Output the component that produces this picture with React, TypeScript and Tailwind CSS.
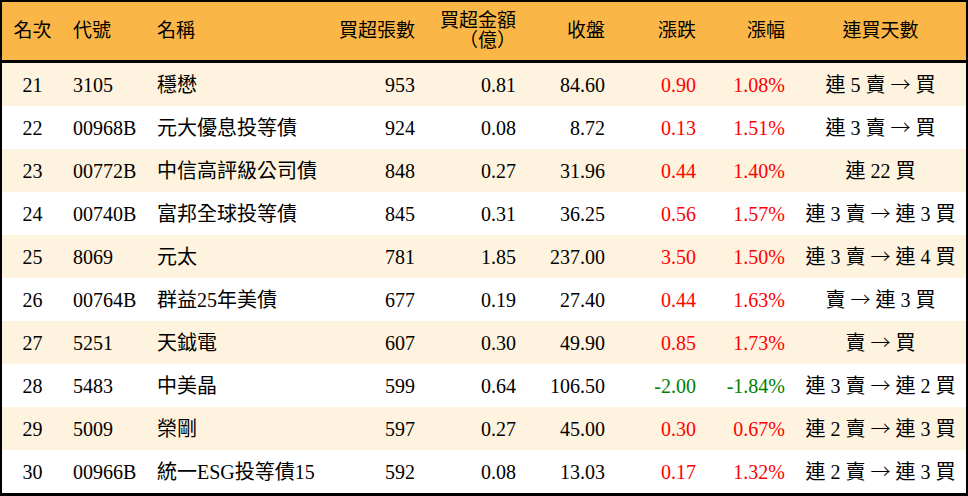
type Row = {
  rank: number;
  code: string;
  name: string;
  lots: string;
  amount: string;
  close: string;
  change: string;
  pct: string;
  streak: string;
};

const rows: Row[] = [
  { rank: 21, code: "3105", name: "穩懋", lots: "953", amount: "0.81", close: "84.60", change: "0.90", pct: "1.08%", streak: "連 5 賣 → 買" },
  { rank: 22, code: "00968B", name: "元大優息投等債", lots: "924", amount: "0.08", close: "8.72", change: "0.13", pct: "1.51%", streak: "連 3 賣 → 買" },
  { rank: 23, code: "00772B", name: "中信高評級公司債", lots: "848", amount: "0.27", close: "31.96", change: "0.44", pct: "1.40%", streak: "連 22 買" },
  { rank: 24, code: "00740B", name: "富邦全球投等債", lots: "845", amount: "0.31", close: "36.25", change: "0.56", pct: "1.57%", streak: "連 3 賣 → 連 3 買" },
  { rank: 25, code: "8069", name: "元太", lots: "781", amount: "1.85", close: "237.00", change: "3.50", pct: "1.50%", streak: "連 3 賣 → 連 4 買" },
  { rank: 26, code: "00764B", name: "群益25年美債", lots: "677", amount: "0.19", close: "27.40", change: "0.44", pct: "1.63%", streak: "賣 → 連 3 買" },
  { rank: 27, code: "5251", name: "天鉞電", lots: "607", amount: "0.30", close: "49.90", change: "0.85", pct: "1.73%", streak: "賣 → 買" },
  { rank: 28, code: "5483", name: "中美晶", lots: "599", amount: "0.64", close: "106.50", change: "-2.00", pct: "-1.84%", streak: "連 3 賣 → 連 2 買" },
  { rank: 29, code: "5009", name: "榮剛", lots: "597", amount: "0.27", close: "45.00", change: "0.30", pct: "0.67%", streak: "連 2 賣 → 連 3 買" },
  { rank: 30, code: "00966B", name: "統一ESG投等債15", lots: "592", amount: "0.08", close: "13.03", change: "0.17", pct: "1.32%", streak: "連 2 賣 → 連 3 買" },
];

// the arrow in Liberation Serif is tiny, take the full-width one from the CJK font
const Streak = ({ text }: { text: string }) => {
  if (!text.includes("→")) return <>{text}</>;
  const [before, after] = text.split(" → ");
  return (
    <>
      {before}{" "}
      <span className="font-['Noto_Sans_CJK_TC',sans-serif] font-light">→</span>
      {" "}{after}
    </>
  );
};

export default function App() {
  return (
    <div className="w-[968px] h-[496px] bg-white font-['Liberation_Serif','Noto_Sans_CJK_TC',serif] text-black">
      <div className="border-2 border-b-[3px] border-black">
        <table className="w-full table-fixed border-separate border-spacing-0">
          <colgroup>
            <col className="w-[61px]" />
            <col className="w-[84px]" />
            <col className="w-[178px]" />
            <col className="w-[100px]" />
            <col className="w-[101px]" />
            <col className="w-[89px]" />
            <col className="w-[91px]" />
            <col className="w-[89px]" />
            <col className="w-[171px]" />
          </colgroup>
          <thead>
            <tr className="h-[61px] bg-[#fab748] text-[19px]">
              <th className="px-[10px] border-b-[3px] border-black font-normal text-center">名次</th>
              <th className="px-[10px] border-b-[3px] border-black font-normal text-left">代號</th>
              <th className="px-[10px] border-b-[3px] border-black font-normal text-left">名稱</th>
              <th className="px-[10px] border-b-[3px] border-black font-normal text-right">買超張數</th>
              <th className="px-[10px] border-b-[3px] border-black font-normal text-right leading-[20px]">
                買超金額
                <br />
                （億）
              </th>
              <th className="px-[10px] border-b-[3px] border-black font-normal text-right">收盤</th>
              <th className="px-[10px] border-b-[3px] border-black font-normal text-right">漲跌</th>
              <th className="px-[10px] border-b-[3px] border-black font-normal text-right">漲幅</th>
              <th className="px-[10px] border-b-[3px] border-black font-normal text-center">連買天數</th>
            </tr>
          </thead>
          <tbody className="text-[20px]">
            {rows.map((r, i) => {
              const color = r.change.startsWith("-") ? "text-[#008000]" : "text-[#ff0000]";
              return (
                <tr key={r.rank} className={`h-[43px] ${i % 2 === 0 ? "bg-[#fef3df]" : "bg-white"}`}>
                  <td className="px-[10px] text-center">{r.rank}</td>
                  <td className="px-[10px] text-left">{r.code}</td>
                  <td className="px-[10px] text-left whitespace-nowrap">{r.name}</td>
                  <td className="px-[10px] text-right">{r.lots}</td>
                  <td className="px-[10px] text-right">{r.amount}</td>
                  <td className="px-[10px] text-right">{r.close}</td>
                  <td className={`px-[10px] text-right ${color}`}>{r.change}</td>
                  <td className={`px-[10px] text-right ${color}`}>{r.pct}</td>
                  <td className="px-[4px] text-center whitespace-nowrap">
                    <Streak text={r.streak} />
                  </td>
                </tr>
              );
            })}
          </tbody>
        </table>
      </div>
    </div>
  );
}
